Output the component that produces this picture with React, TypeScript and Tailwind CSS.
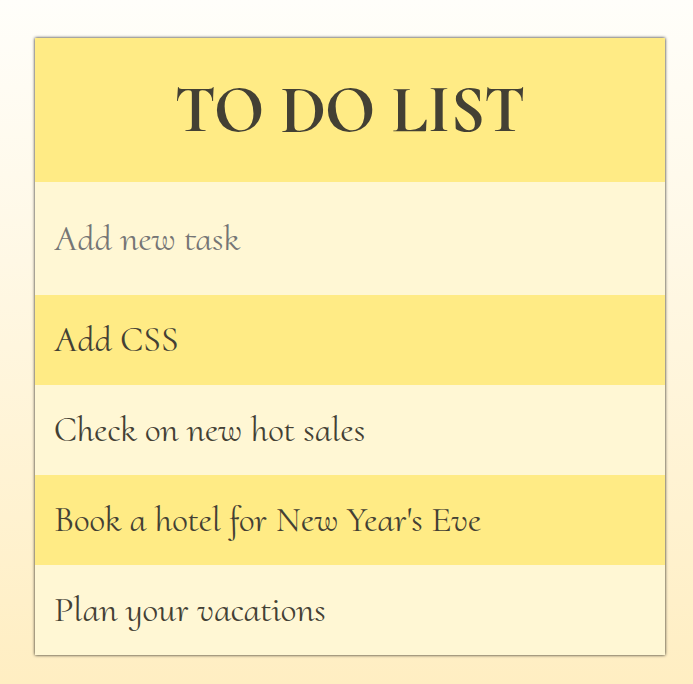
import { useState } from "react";

const initialTasks = [
  "Add CSS",
  "Check on new hot sales",
  "Book a hotel for New Year's Eve",
  "Plan your vacations",
];

export default function App() {
  const [tasks, setTasks] = useState(initialTasks);
  const [draft, setDraft] = useState("");

  return (
    <div className="min-h-screen bg-linear-to-b from-[#fffefa] to-[#ffeec2] pt-[38px] pr-7 pb-7 pl-[35px] font-['Cormorant_Upright','Cormorant_Infant','Liberation_Serif',serif] text-[#434034]">
      <main className="bg-[#fff7d4] shadow-[0_0_3px_rgba(0,0,0,0.9)]">
        <h1 className="bg-[#ffeb85] py-9 text-center text-[67px] leading-[72px] font-bold">TO DO LIST</h1>
        <form
          onSubmit={(event) => {
            event.preventDefault();
            if (draft.trim()) setTasks([...tasks, draft.trim()]);
            setDraft("");
          }}
        >
          <input
            aria-label="Add new task"
            placeholder="Add new task"
            value={draft}
            onChange={(event) => setDraft(event.target.value)}
            className="block h-[113px] w-full px-[19px] text-[36px] placeholder:text-[#757575] focus:outline-none"
          />
        </form>
        <ul>
          {tasks.map((task, index) => (
            <li key={index} className="px-[19px] py-6 text-[36px] leading-[42px] odd:bg-[#ffeb85]">
              {task}
            </li>
          ))}
        </ul>
      </main>
    </div>
  );
}
